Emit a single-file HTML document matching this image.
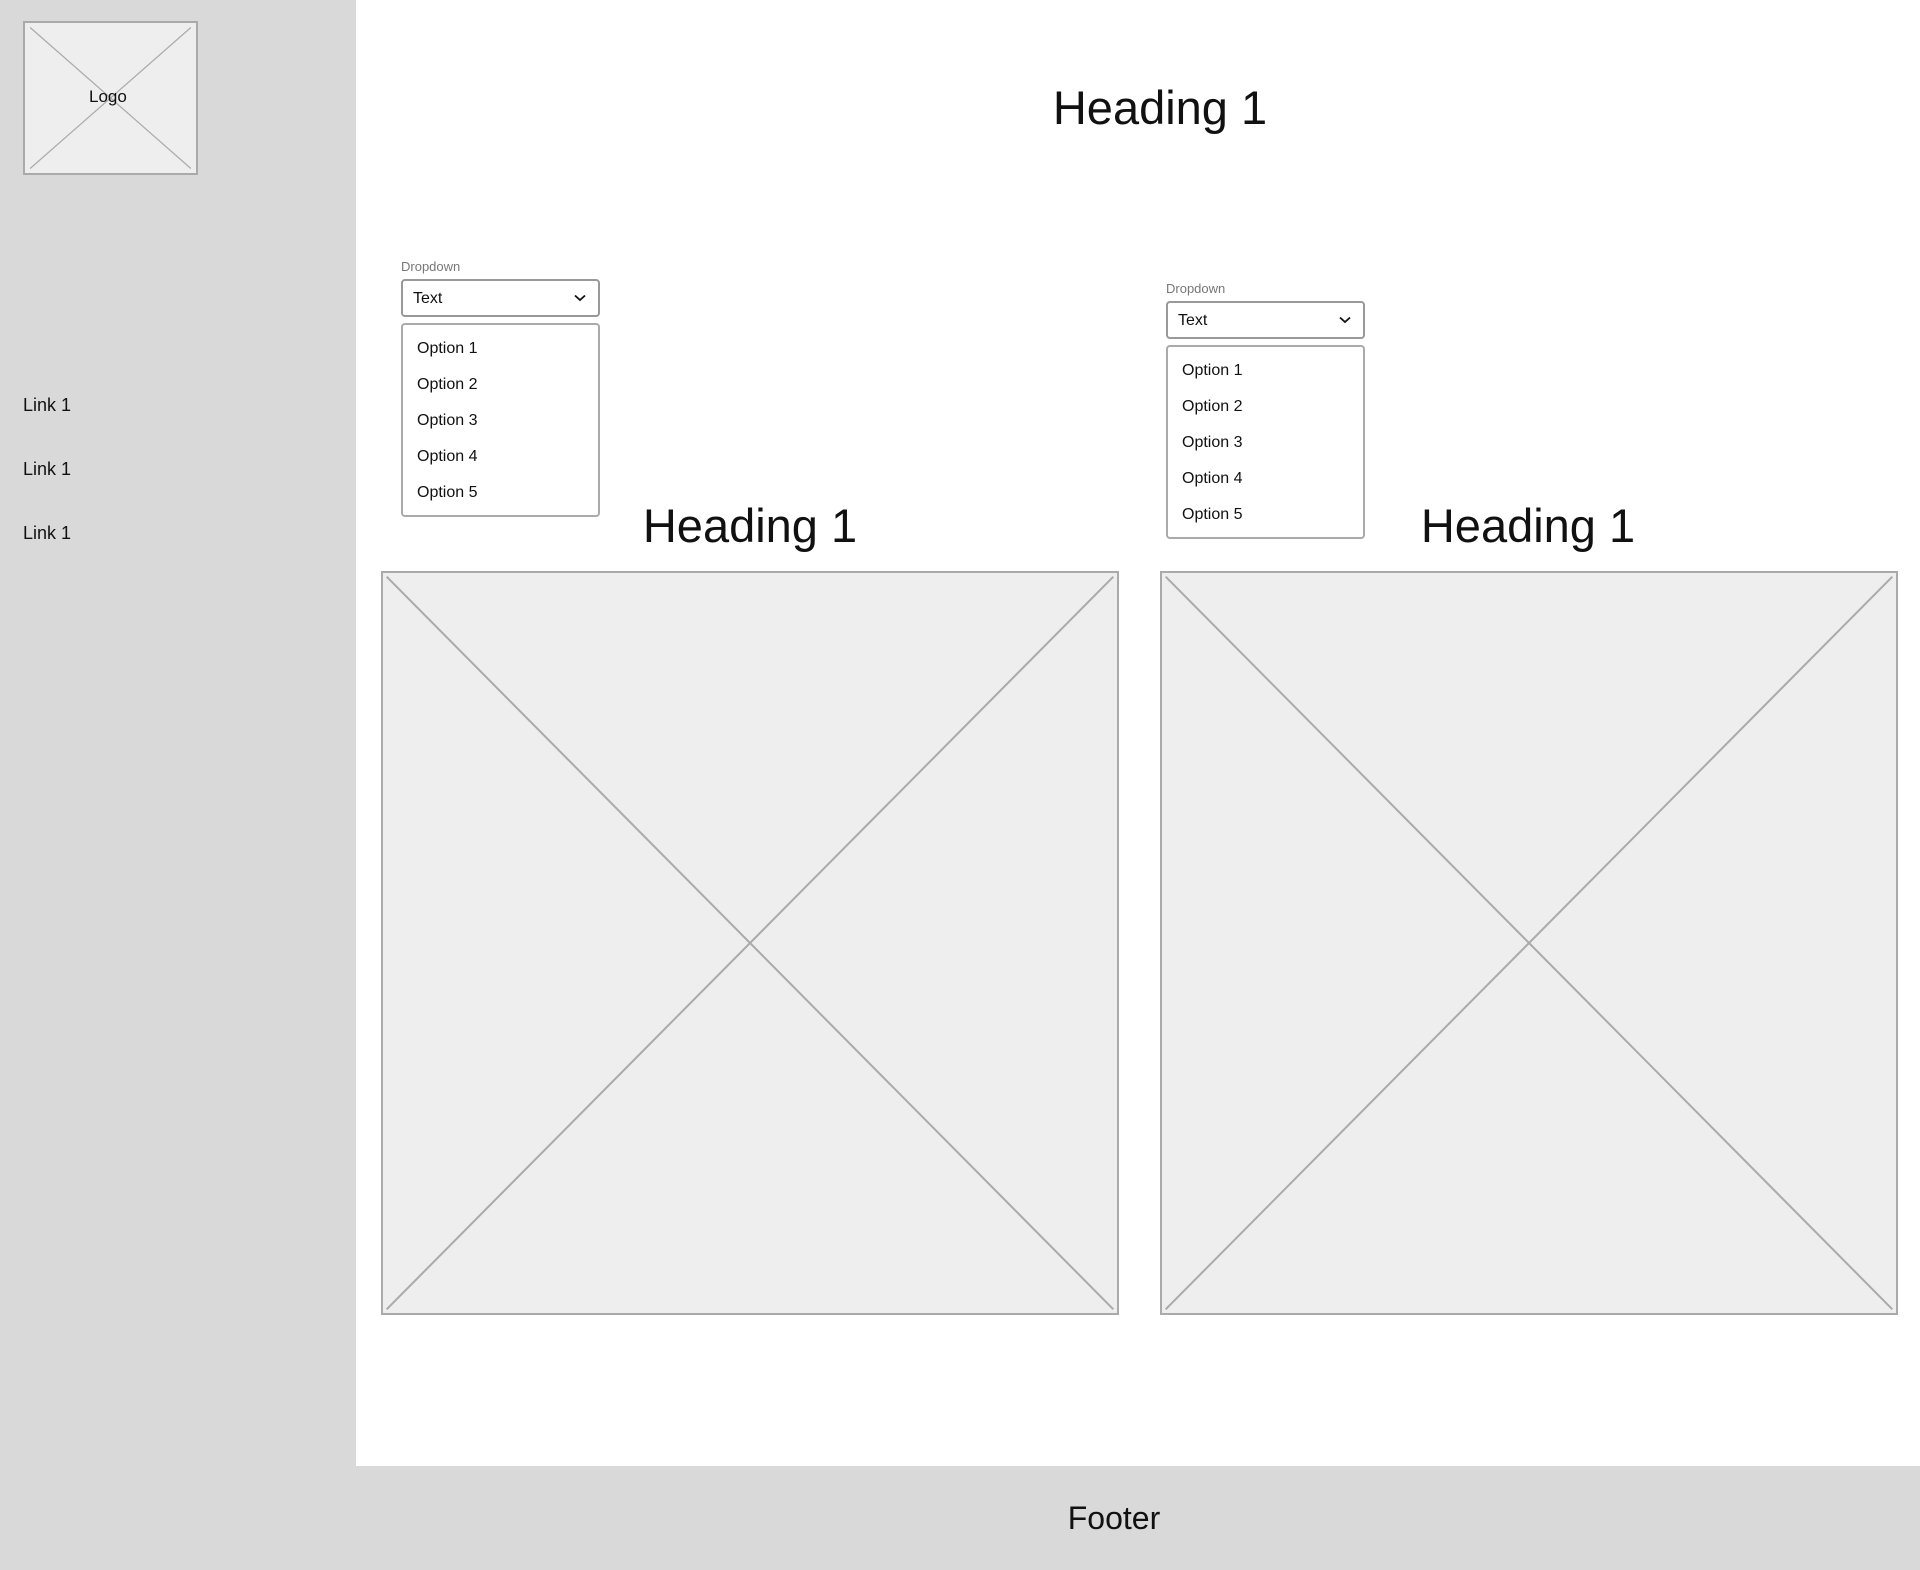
<!DOCTYPE html>
<html><head><meta charset="utf-8"><style>
*{margin:0;padding:0;box-sizing:border-box}
body{width:1920px;height:1570px;position:relative;background:#fff;font-family:"Liberation Sans",sans-serif;color:#111;overflow:hidden}
.abs{position:absolute}
.side{left:0;top:0;width:356px;height:1570px;background:#d9d9d9}
.foot{left:0;top:1466px;width:1920px;height:104px;background:#d9d9d9}
.ph{position:absolute;background:#eee;border:2px solid #aaa}
.ph svg{position:absolute;left:0;top:0;width:100%;height:100%}
.h{font-size:47px;text-align:center;width:600px;line-height:60px}
.lbl{font-size:13px;color:#777}
.sel{border:2px solid #999;border-radius:4px;background:#fff;width:199px;height:38px;font-size:16px;padding:9px 10px}
.list{border:2px solid #aaa;border-radius:4px;background:#fff;width:199px;height:194px}
.list div{position:absolute;left:14px;font-size:16px}
.link{font-size:18px;left:23px}
</style></head><body>
<div class="abs side"></div>
<div class="abs foot"></div>
<div class="ph" style="left:23px;top:21px;width:175px;height:154px"><svg viewBox="0 0 100 100" preserveAspectRatio="none"><line x1="3" y1="3" x2="97" y2="97" stroke="#aaa" stroke-width="1.2" vector-effect="non-scaling-stroke"/><line x1="97" y1="3" x2="3" y2="97" stroke="#aaa" stroke-width="1.2" vector-effect="non-scaling-stroke"/></svg><span style="position:absolute;left:64px;top:64px;font-size:17px">Logo</span></div>
<div class="abs link" style="top:395px">Link 1</div>
<div class="abs link" style="top:459px">Link 1</div>
<div class="abs link" style="top:523px">Link 1</div>
<div class="abs h" style="left:860px;top:78px">Heading 1</div>

<div class="abs lbl" style="left:401px;top:259px">Dropdown</div>
<div class="abs sel" style="left:401px;top:279px">Text<svg style="position:absolute;right:12px;top:13px" width="12" height="8" viewBox="0 0 12 8"><path d="M1 1.5 L6 6 L11 1.5" fill="none" stroke="#111" stroke-width="1.8"/></svg></div>
<div class="abs list" style="left:401px;top:323px">
<div style="top:15px">Option 1</div><div style="top:51px">Option 2</div><div style="top:87px">Option 3</div><div style="top:123px">Option 4</div><div style="top:159px">Option 5</div></div>

<div class="abs lbl" style="left:1166px;top:281px">Dropdown</div>
<div class="abs sel" style="left:1166px;top:301px">Text<svg style="position:absolute;right:12px;top:13px" width="12" height="8" viewBox="0 0 12 8"><path d="M1 1.5 L6 6 L11 1.5" fill="none" stroke="#111" stroke-width="1.8"/></svg></div>
<div class="abs list" style="left:1166px;top:345px">
<div style="top:15px">Option 1</div><div style="top:51px">Option 2</div><div style="top:87px">Option 3</div><div style="top:123px">Option 4</div><div style="top:159px">Option 5</div></div>

<div class="abs h" style="left:450px;top:496px">Heading 1</div>
<div class="abs h" style="left:1228px;top:496px">Heading 1</div>

<div class="ph" style="left:381px;top:571px;width:738px;height:744px"><svg viewBox="0 0 100 100" preserveAspectRatio="none"><line x1="0.5" y1="0.5" x2="99.5" y2="99.5" stroke="#aaa" stroke-width="2" vector-effect="non-scaling-stroke"/><line x1="99.5" y1="0.5" x2="0.5" y2="99.5" stroke="#aaa" stroke-width="2" vector-effect="non-scaling-stroke"/></svg></div>
<div class="ph" style="left:1160px;top:571px;width:738px;height:744px"><svg viewBox="0 0 100 100" preserveAspectRatio="none"><line x1="0.5" y1="0.5" x2="99.5" y2="99.5" stroke="#aaa" stroke-width="2" vector-effect="non-scaling-stroke"/><line x1="99.5" y1="0.5" x2="0.5" y2="99.5" stroke="#aaa" stroke-width="2" vector-effect="non-scaling-stroke"/></svg></div>

<div class="abs" style="left:914px;top:1500px;width:400px;text-align:center;font-size:32px">Footer</div>
</body></html>
